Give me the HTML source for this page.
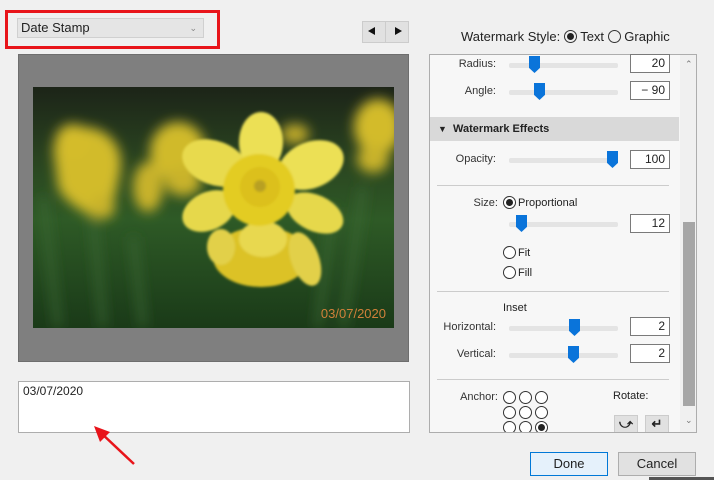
<!DOCTYPE html>
<html><head><meta charset="utf-8"><style>
*{margin:0;padding:0;box-sizing:border-box}
body{width:714px;height:480px;background:#f0f0f0;font-family:"Liberation Sans",sans-serif;font-size:12px;color:#222;position:relative;overflow:hidden}
.a{position:absolute}
.lbl{position:absolute;text-align:right;font-size:11px;color:#333}
.trk{position:absolute;height:5px;background:#e4e4e4;border-radius:2px}
.thumb{position:absolute;width:11px;height:17px;background:#0a74da;clip-path:polygon(0 0,100% 0,100% 70%,50% 100%,0 70%)}
.box{position:absolute;width:40px;height:19px;border:1px solid #7a7a7a;background:#fff;text-align:right;padding-right:4px;font-size:12px;line-height:17px}
.rad{position:absolute;width:13px;height:13px;border:1px solid #333;border-radius:50%;background:#fff}
.sep{position:absolute;left:437px;width:232px;height:1px;background:#ccc}
.btn{position:absolute;height:24px;border:1px solid #adadad;background:#e1e1e1;text-align:center;line-height:22px;font-size:13px}
</style></head><body>
<div class="a" style="left:5px;top:10px;width:215px;height:39px;border:3px solid #e8141a"></div>
<div class="a" style="left:17px;top:18px;width:187px;height:20px;background:#e5e5e5;border:1px solid #d0d0d0;font-size:13px;line-height:18px;padding-left:3px">Date Stamp<span style="position:absolute;right:6px;top:0;color:#888;font-size:9px">&#8964;</span></div>
<div class="a" style="left:362px;top:21px;width:47px;height:22px;background:#e1e1e1;border:1px solid #ccc"></div>
<div class="a" style="left:385px;top:21px;width:1px;height:22px;background:#ccc"></div>
<div class="a" style="left:368px;top:27px;width:0;height:0;border-top:4px solid transparent;border-bottom:4px solid transparent;border-right:7px solid #111"></div>
<div class="a" style="left:395px;top:27px;width:0;height:0;border-top:4px solid transparent;border-bottom:4px solid transparent;border-left:7px solid #111"></div>

<div class="a" style="left:18px;top:54px;width:391px;height:308px;background:#7f7f7f;border:1px solid #6e6e6e"></div>
<svg class="a" style="left:33px;top:87px" width="361" height="241" viewBox="0 0 361 241">
<defs><filter id="b"><feGaussianBlur stdDeviation="6"/></filter><filter id="b2"><feGaussianBlur stdDeviation="1.2"/></filter>
<linearGradient id="g" x1="0" y1="0" x2="0" y2="1"><stop offset="0" stop-color="#1c2418"/><stop offset=".3" stop-color="#2a4420"/><stop offset=".55" stop-color="#2e5a26"/><stop offset="1" stop-color="#1a3a18"/></linearGradient></defs>
<rect width="361" height="241" fill="url(#g)"/>
<g filter="url(#b)">
<path d="M20 60 Q40 30 70 45 Q95 60 85 95 Q80 130 60 130 Q30 115 25 100 Z" fill="#d2bb2a"/>
<ellipse cx="40" cy="55" rx="18" ry="18" fill="#d4bc2c"/>
<ellipse cx="70" cy="120" rx="12" ry="12" fill="#c8b22a"/>
<ellipse cx="145" cy="65" rx="28" ry="30" fill="#d0ba2c"/>
<ellipse cx="115" cy="100" rx="15" ry="25" fill="#c8b22a"/>
<ellipse cx="150" cy="95" rx="18" ry="14" fill="#c8b22a"/>
<ellipse cx="262" cy="47" rx="14" ry="10" fill="#c0aa2a"/>
<ellipse cx="345" cy="40" rx="24" ry="28" fill="#d3bb2c"/>
<ellipse cx="340" cy="72" rx="16" ry="14" fill="#c8b22a"/>
<path d="M10 110 L25 240 M60 130 L70 240 M100 150 L110 240 M300 120 L285 240 M330 100 L310 240" stroke="#3c6c34" stroke-width="5"/>
</g>
<g filter="url(#b2)">
<ellipse cx="228" cy="170" rx="48" ry="30" fill="#dcc226"/>
<ellipse cx="272" cy="172" rx="14" ry="28" transform="rotate(-20 272 172)" fill="#e2d048"/>
<ellipse cx="188" cy="160" rx="14" ry="18" fill="#e2d048"/>
<ellipse cx="228" cy="55" rx="22" ry="30" fill="#ece054"/>
<ellipse cx="182" cy="76" rx="34" ry="22" transform="rotate(20 182 76)" fill="#e8da4e"/>
<ellipse cx="278" cy="78" rx="34" ry="23" transform="rotate(-22 278 78)" fill="#ece054"/>
<ellipse cx="176" cy="124" rx="28" ry="19" transform="rotate(-25 176 124)" fill="#e6d84c"/>
<ellipse cx="282" cy="126" rx="30" ry="18" transform="rotate(25 282 126)" fill="#e6d84c"/>
<ellipse cx="230" cy="152" rx="24" ry="18" fill="#e8d850"/>
<circle cx="226" cy="103" r="36" fill="#e3cc22"/>
<circle cx="227" cy="100" r="20" fill="#dcc01c"/>
<circle cx="227" cy="99" r="6" fill="#b8a020"/>
</g>
<text x="353" y="231" text-anchor="end" fill="#d0803a" font-size="13" font-family="Liberation Sans">03/07/2020</text>
</svg>

<div class="a" style="left:18px;top:381px;width:392px;height:52px;background:#fff;border:1px solid #adadad;padding:2px 4px;font-size:12px">03/07/2020</div>
<svg class="a" style="left:88px;top:420px" width="55" height="50"><line x1="46" y1="44" x2="12" y2="12" stroke="#e8141a" stroke-width="2.5"/><polygon points="6,6 22,12 12,22" fill="#e8141a"/></svg>

<div class="a" style="left:461px;top:29px;font-size:13px">Watermark Style: <span style="display:inline-block;width:13px;height:13px;border:1px solid #333;border-radius:50%;vertical-align:-2px;position:relative"><span style="position:absolute;left:2px;top:2px;width:7px;height:7px;background:#222;border-radius:50%"></span></span> Text <span style="display:inline-block;width:13px;height:13px;border:1px solid #333;border-radius:50%;vertical-align:-2px"></span> Graphic</div>

<div class="a" style="left:429px;top:54px;width:268px;height:379px;background:#f7f7f7;border:1px solid #adadad;overflow:hidden">
<div class="a" style="left:250px;top:0;width:17px;height:378px;background:#f0f0f0"></div>
<div class="a" style="left:253px;top:167px;width:12px;height:184px;background:#a6a6a6"></div>
<div class="a" style="left:255px;top:4px;font-size:9px;color:#777">&#8963;</div>
<div class="a" style="left:255px;top:360px;font-size:9px;color:#777">&#8964;</div>
</div>
<div class="lbl" style="left:430px;top:58px;width:66px">Radius:</div>
<div class="trk" style="left:509px;top:63px;width:109px"></div><div class="thumb" style="left:529px;top:56px"></div>
<div class="box" style="left:630px;top:54px">20</div>
<div class="lbl" style="left:430px;top:85px;width:66px">Angle:</div>
<div class="trk" style="left:509px;top:90px;width:109px"></div><div class="thumb" style="left:534px;top:83px"></div>
<div class="box" style="left:630px;top:81px">&#8722; 90</div>
<div class="a" style="left:430px;top:117px;width:249px;height:24px;background:#d9d9d9;font-weight:bold;font-size:11px;line-height:24px;padding-left:8px"><span style="font-size:9px">&#9660;</span>&nbsp; Watermark Effects</div>
<div class="lbl" style="left:430px;top:153px;width:66px">Opacity:</div>
<div class="trk" style="left:509px;top:158px;width:109px"></div><div class="thumb" style="left:607px;top:151px"></div>
<div class="box" style="left:630px;top:150px">100</div>
<div class="sep" style="top:185px"></div>
<div class="lbl" style="left:430px;top:197px;width:68px">Size:</div>
<div class="rad" style="left:503px;top:196px"><div style="position:absolute;left:2px;top:2px;width:7px;height:7px;background:#222;border-radius:50%"></div></div>
<div class="a" style="left:518px;top:197px;font-size:11px">Proportional</div>
<div class="trk" style="left:509px;top:222px;width:109px"></div><div class="thumb" style="left:516px;top:215px"></div>
<div class="box" style="left:630px;top:214px">12</div>
<div class="rad" style="left:503px;top:246px"></div><div class="a" style="left:518px;top:247px;font-size:11px">Fit</div>
<div class="rad" style="left:503px;top:266px"></div><div class="a" style="left:518px;top:267px;font-size:11px">Fill</div>
<div class="sep" style="top:291px"></div>
<div class="a" style="left:503px;top:302px;font-size:11px">Inset</div>
<div class="lbl" style="left:430px;top:321px;width:66px">Horizontal:</div>
<div class="trk" style="left:509px;top:326px;width:109px"></div><div class="thumb" style="left:569px;top:319px"></div>
<div class="box" style="left:630px;top:317px">2</div>
<div class="lbl" style="left:430px;top:348px;width:66px">Vertical:</div>
<div class="trk" style="left:509px;top:353px;width:109px"></div><div class="thumb" style="left:568px;top:346px"></div>
<div class="box" style="left:630px;top:344px">2</div>
<div class="sep" style="top:379px"></div>
<div class="lbl" style="left:430px;top:391px;width:68px">Anchor:</div>
<div class="rad" style="left:503px;top:391px"></div><div class="rad" style="left:519px;top:391px"></div><div class="rad" style="left:535px;top:391px"></div>
<div class="rad" style="left:503px;top:406px"></div><div class="rad" style="left:519px;top:406px"></div><div class="rad" style="left:535px;top:406px"></div>
<div class="a" style="left:500px;top:421px;width:60px;height:11px;overflow:hidden"><div class="rad" style="left:3px;top:0"></div><div class="rad" style="left:19px;top:0"></div><div class="rad" style="left:35px;top:0"><div style="position:absolute;left:2px;top:2px;width:7px;height:7px;background:#222;border-radius:50%"></div></div></div>
<div class="a" style="left:613px;top:390px;font-size:11px">Rotate:</div>
<div class="a" style="left:614px;top:415px;width:24px;height:17px;background:#e1e1e1;border:1px solid #ccc;border-bottom:none;text-align:center;font-weight:bold;font-size:13px;line-height:16px">&#10555;</div>
<div class="a" style="left:645px;top:415px;width:24px;height:17px;background:#e1e1e1;border:1px solid #ccc;border-bottom:none;text-align:center;font-weight:bold;font-size:13px;line-height:16px">&#8629;</div>

<div class="btn" style="left:530px;top:452px;width:78px;border-color:#0078d7;background:#e5f1fb">Done</div>
<div class="btn" style="left:618px;top:452px;width:78px">Cancel</div>
<div class="a" style="left:649px;top:477px;width:65px;height:3px;background:#555"></div>
</body></html>
